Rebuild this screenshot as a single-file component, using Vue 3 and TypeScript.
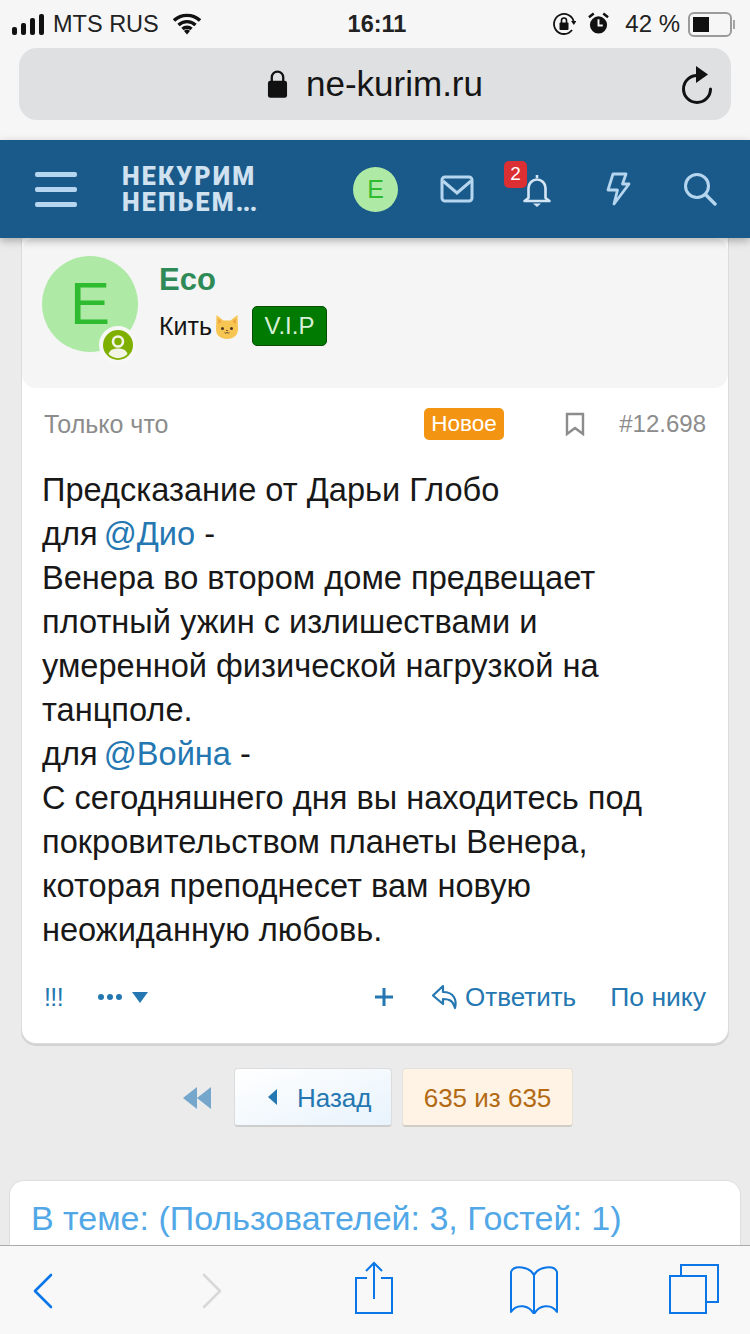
<script setup lang="ts">
// Страница темы форума в мобильном Safari
interface BodyLine {
  text: string
  mention?: string
  tail?: string
}

const lines: BodyLine[] = [
  { text: 'Предсказание от Дарьи Глобо' },
  { text: 'для ', mention: '@Дио', tail: ' -' },
  { text: 'Венера во втором доме предвещает' },
  { text: 'плотный ужин с излишествами и' },
  { text: 'умеренной физической нагрузкой на' },
  { text: 'танцполе.' },
  { text: 'для ', mention: '@Война', tail: ' -' },
  { text: 'С сегодняшнего дня вы находитесь под' },
  { text: 'покровительством планеты Венера,' },
  { text: 'которая преподнесет вам новую' },
  { text: 'неожиданную любовь.' },
]

const signal = [8, 12, 17, 21]
</script>

<template>
  <div class="screen">
    <div class="chrome">
      <div class="status">
        <div class="st-left">
          <div class="signal">
            <i v-for="h in signal" :key="h" :style="{ height: h + 'px' }"></i>
          </div>
          <span>MTS RUS</span>
          <svg class="wifi" width="28" height="22" viewBox="0 0 28 22">
            <path d="M1 7.5a19 19 0 0 1 26 0M5.5 12a12.5 12.5 0 0 1 17 0M9.5 16a6.5 6.5 0 0 1 9 0" fill="none" stroke="#111" stroke-width="3.4" />
            <path d="M14 21.5l-3-3.6a4.5 4.5 0 0 1 6 0z" fill="#111" />
          </svg>
        </div>
        <div class="st-time">16:11</div>
        <div class="st-right">
          <svg width="24" height="26" viewBox="0 0 24 26">
            <path d="M20 19A10 10 0 1 1 21.8 11" fill="none" stroke="#111" stroke-width="1.8" />
            <path d="M19 10h5.5l-2.7 4z" fill="#111" />
            <rect x="7.5" y="11.5" width="9" height="7.5" rx="1" fill="#111" />
            <path d="M9.5 12V9.500a2.500 2.500 0 0 1 5 0V12" fill="none" stroke="#111" stroke-width="1.6" />
          </svg>
          <svg class="alarm" width="21" height="26" viewBox="0 0 22 26">
            <circle cx="11" cy="14" r="9" fill="#111" />
            <path d="M11 8v6.5h4.5" fill="none" stroke="#f6f6f6" stroke-width="2" />
            <path d="M1 6l5-4M21 6l-5-4" stroke="#111" stroke-width="2.6" />
          </svg>
          <span class="pct">42 %</span>
          <div class="battery"><i></i></div>
          <div class="nub"></div>
        </div>
      </div>
      <div class="address">
        <svg class="lock" width="21" height="28" viewBox="0 0 22 29">
          <rect x="1" y="11" width="20" height="18" rx="2.5" fill="#111" />
          <path d="M5 12V7.5a6 6 0 0 1 12 0V12" fill="none" stroke="#111" stroke-width="2.4" />
        </svg>
        <span class="host">ne-kurim.ru</span>
        <svg class="reload" width="32" height="38" viewBox="0 0 32 38">
          <path d="M15 9.500A13.500 13.500 0 1 0 28.500 23" fill="none" stroke="#111" stroke-width="3" stroke-linecap="round" />
          <path d="M14 0l12 8.500-12 8.500z" fill="#111" />
        </svg>
      </div>
    </div>

    <header class="forum-head">
      <div class="burger"><i></i><i></i><i></i></div>
      <div class="logo">НЕКУРИМ<br />НЕПЬЕМ<span class="dots">...</span></div>
      <div class="head-avatar">E</div>
      <svg class="h-ic mail" width="34" height="28" viewBox="0 0 34 28">
        <rect x="2" y="2" width="30" height="24" rx="3" fill="none" stroke="#b6d6f0" stroke-width="3" />
        <path d="M3 6l14 12L31 6" fill="none" stroke="#b6d6f0" stroke-width="3" />
      </svg>
      <div class="bell-wrap">
        <svg width="30" height="34" viewBox="0 0 30 34">
          <path d="M15 2v3M6.500 25V15a8.500 8.500 0 0 1 17 0v10l4 3H2.500z" fill="none" stroke="#d4e6f5" stroke-width="2.600" stroke-linejoin="round" />
          <path d="M11 30.500h8l-4 3.500z" fill="#d4e6f5" />
        </svg>
        <span class="count">2</span>
      </div>
      <svg class="h-ic bolt" width="26" height="34" viewBox="0 0 26 34">
        <path d="M8 2h13l-3.500 10H24L9 32l3.500-14H3z" fill="none" stroke="#b6d6f0" stroke-width="2.800" stroke-linejoin="round" />
      </svg>
      <svg class="h-ic search" width="34" height="34" viewBox="0 0 34 34">
        <circle cx="14" cy="14" r="11.500" fill="none" stroke="#b6d6f0" stroke-width="3" />
        <path d="M22.500 22.500L32 32" stroke="#b6d6f0" stroke-width="3.400" stroke-linecap="round" />
      </svg>
    </header>

    <main class="page">
      <article class="post">
        <div class="user">
          <div class="avatar">
            E
            <span class="online">
              <svg width="30" height="30" viewBox="0 0 30 30">
                <circle cx="15" cy="15" r="15" fill="#7fb000" />
                <circle cx="15" cy="11.500" r="5" fill="#7fb000" stroke="#f2f5e6" stroke-width="2.600" />
                <path d="M5.500 24c2-5 5.500-5.500 9.500-5.500s7.500.5 9.500 5.500a13 13 0 0 1-19 0z" fill="#f2f5e6" />
              </svg>
            </span>
          </div>
          <div class="user-info">
            <div class="name">Eco</div>
            <div class="title-row">
              <span>Кить</span>
              <svg class="cat" width="26" height="26" viewBox="0 0 26 26">
                <path d="M2.500 1l7 5.500h7l7-5.500 .5 14.500c0 6-5 9.500-11 9.500S2 21.500 2 15.500z" fill="#f7c552" />
                <path d="M4 4.500l3.500 3L4.500 10zM22 4.500l-3.500 3 3 2.500z" fill="#eda33f" />
                <circle cx="8.500" cy="14.500" r="1.500" fill="#4a3320" />
                <circle cx="17.500" cy="14.500" r="1.500" fill="#4a3320" />
                <path d="M13 17l-1.500-1h3z" fill="#4a3320" />
                <path d="M10.500 18.500c1 1.200 2 1 2.500-.5.500 1.500 1.500 1.700 2.500.5" fill="none" stroke="#4a3320" stroke-width=".8" />
              </svg>
              <span class="vip">V.I.P</span>
            </div>
          </div>
        </div>

        <div class="meta">
          <span class="when">Только что</span>
          <span class="new-tag">Новое</span>
          <svg class="bookmark" width="20" height="24" viewBox="0 0 20 24">
            <path d="M2 2h16v20l-8-6-8 6z" fill="none" stroke="#8c8c8c" stroke-width="2.400" />
          </svg>
          <span class="num">#12.698</span>
        </div>

        <div class="body">
          <div v-for="(l, i) in lines" :key="i">
            {{ l.text }}<a v-if="l.mention" class="mention">{{ l.mention }}</a>{{ l.tail }}
          </div>
        </div>

        <div class="actions">
          <span class="bang">!!!</span>
          <span class="more">
            <i></i><i></i><i></i>
            <b></b>
          </span>
          <svg class="plus" width="20" height="20" viewBox="0 0 20 20">
            <path d="M10 1v18M1 10h18" stroke="#2577b1" stroke-width="3" />
          </svg>
          <svg class="reply" width="28" height="26" viewBox="0 0 28 26">
            <path d="M12 2L2 11.500 12 20v-5c6 0 9.500 1 12 9 2-8-1-16-12-16z" fill="none" stroke="#2577b1" stroke-width="2.200" stroke-linejoin="round" />
          </svg>
          <span class="act">Ответить</span>
          <span class="act nick">По нику</span>
        </div>
      </article>

      <nav class="pager">
        <svg class="first" width="28" height="22" viewBox="0 0 28 22">
          <path d="M14 0v22L0 11zM28 0v22L14 11z" fill="#75a6cb" />
        </svg>
        <button class="prev">
          <svg width="9" height="16" viewBox="0 0 9 16"><path d="M9 0v16L0 8z" fill="#2577b1" /></svg>
          <span>Назад</span>
        </button>
        <span class="current">635 из 635</span>
      </nav>

      <section class="online-box">
        <h3>В теме: (Пользователей: 3, Гостей: 1)</h3>
      </section>
    </main>

    <footer class="toolbar">
      <svg class="t-back" width="22" height="36" viewBox="0 0 22 36">
        <path d="M19 2L3 18l16 16" fill="none" stroke="#0a76e8" stroke-width="2.600" stroke-linecap="round" stroke-linejoin="round" />
      </svg>
      <svg class="t-fwd" width="22" height="36" viewBox="0 0 22 36">
        <path d="M3 2l16 16L3 34" fill="none" stroke="#d8d8d8" stroke-width="2.600" stroke-linecap="round" stroke-linejoin="round" />
      </svg>
      <svg class="t-share" width="40" height="54" viewBox="0 0 40 54">
        <path d="M13 17H2v35h36V17H27" fill="none" stroke="#0a76e8" stroke-width="2" />
        <path d="M20 38V2M12 10l8-8 8 8" fill="none" stroke="#0a76e8" stroke-width="2" />
      </svg>
      <svg class="t-book" width="50" height="50" viewBox="0 0 50 50">
        <path d="M25 11C21 3 5 0 2 8v40c6-9 18-7 23 2 5-9 17-11 23-2V8C45 0 29 3 25 11zM25 11v39" fill="none" stroke="#0a76e8" stroke-width="2" stroke-linejoin="round" />
      </svg>
      <svg class="t-tabs" width="50" height="50" viewBox="0 0 50 50">
        <rect x="1" y="12" width="36" height="37" fill="none" stroke="#0a76e8" stroke-width="2" />
        <path d="M12 12V1h37v37H38" fill="none" stroke="#0a76e8" stroke-width="2" />
      </svg>
    </footer>
  </div>
</template>

<style>
html,
body {
  margin: 0;
  background: #ebebeb;
}
</style>

<style scoped>
.screen {
  width: 750px;
  height: 1334px;
  display: flex;
  flex-direction: column;
  overflow: hidden;
  background: #ebebeb;
  color: #141414;
  font-family: "Liberation Sans", Arial, sans-serif;
}
.chrome {
  height: 140px;
  flex: none;
  background: #f6f6f6;
}
.status {
  height: 48px;
  padding: 0 15px 0 12px;
  display: grid;
  grid-template-columns: 1fr auto 1fr;
  align-items: center;
  font-size: 23.5px;
  box-sizing: border-box;
}
.st-left,
.st-right {
  display: flex;
  align-items: center;
}
.st-left span {
  margin-left: 9px;
  color: #222;
}
.signal {
  display: flex;
  align-items: flex-end;
  gap: 4px;
}
.signal i {
  width: 5px;
  border-radius: 2px;
  background: #111;
}
.wifi {
  margin-left: 14px;
}
.st-time {
  margin-left: 7px;
  font-size: 23.5px;
  font-weight: 700;
  color: #222;
}
.st-right {
  justify-content: flex-end;
}
.alarm {
  margin-left: 12px;
}
.pct {
  margin-left: 16px;
  font-size: 24px;
  color: #222;
}
.battery {
  width: 44px;
  height: 25px;
  margin-left: 8px;
  padding: 3px;
  box-sizing: border-box;
  border: 2px solid #9b9b9b;
  border-radius: 6px;
}
.battery i {
  display: block;
  width: 16px;
  height: 100%;
  background: #111;
}
.nub {
  width: 2px;
  height: 9px;
  margin-left: 1px;
  background: #a5a5a5;
}
.address {
  margin: 0 19px;
  height: 72px;
  border-radius: 18px;
  background: #dfe0e2;
  display: flex;
  align-items: center;
  justify-content: center;
  position: relative;
}
.lock {
  margin-right: 18px;
}
.host {
  font-size: 35px;
  color: #151515;
}
.reload {
  position: absolute;
  right: 17px;
  top: 18px;
}
.forum-head {
  height: 98px;
  flex: none;
  background: #1a5a8a;
  display: flex;
  align-items: center;
  position: relative;
  z-index: 2;
  box-shadow: 0 3px 8px rgba(0, 0, 0, 0.28);
}
.burger {
  width: 42px;
  margin-left: 35px;
  display: flex;
  flex-direction: column;
  gap: 10px;
}
.burger i {
  height: 5px;
  border-radius: 2px;
  background: #b6d6f0;
}
.logo {
  width: 146px;
  margin: 2px 0 0 45px;
  font-family: Roboto, "Liberation Sans", sans-serif;
  font-size: 25px;
  font-weight: 900;
  line-height: 26px;
  letter-spacing: 2.2px;
  color: #d0e1f0;
  white-space: nowrap;
}
.dots {
  letter-spacing: -0.6px;
}
.head-avatar {
  width: 45px;
  height: 45px;
  margin-left: 85px;
  border-radius: 50%;
  background: #aeeaa6;
  color: #2fbb2f;
  font-size: 25px;
  line-height: 45px;
  text-align: center;
}
.mail {
  margin-left: 42px;
}
.bell-wrap {
  width: 30px;
  height: 34px;
  margin-left: 48px;
  position: relative;
  top: 1px;
}
.count {
  position: absolute;
  left: -18px;
  top: -12px;
  width: 23px;
  height: 27px;
  border-radius: 5px;
  background: #dc2f34;
  color: #fff;
  font-size: 19px;
  line-height: 26px;
  text-align: center;
}
.bolt {
  margin-left: 53px;
}
.search {
  margin-left: 52px;
}
.page {
  flex: 1;
  min-height: 0;
  overflow: hidden;
  padding: 0 22px;
}
.post {
  height: 805px;
  background: #fff;
  border-radius: 0 0 14px 14px;
  box-shadow: 0 0 0 1px #dcdcdc, 0 2px 0 1px #d2d2d2;
  overflow: hidden;
}
.user {
  height: 150px;
  box-sizing: border-box;
  padding: 18px 20px;
  display: flex;
  background: #f5f5f5;
  border-radius: 14px;
}
.avatar {
  width: 96px;
  height: 96px;
  flex: none;
  border-radius: 50%;
  background: #aeeaa6;
  color: #2fbb2f;
  font-size: 60px;
  line-height: 96px;
  text-align: center;
  position: relative;
}
.online {
  position: absolute;
  right: 1px;
  bottom: -12px;
  width: 30px;
  height: 30px;
  border: 4px solid #f7f7f7;
  border-radius: 50%;
  display: block;
  background: #f7f7f7;
}
.online svg {
  display: block;
}
.user-info {
  margin-left: 21px;
}
.name {
  margin-top: 6px;
  font-size: 31px;
  line-height: 36px;
  font-weight: 700;
  color: #2e8b57;
}
.title-row {
  margin-top: 7px;
  display: flex;
  align-items: center;
  font-size: 25px;
  height: 42px;
}
.cat {
  margin: 0 0 -2px 2px;
}
.vip {
  margin-left: 12px;
  width: 75px;
  height: 40px;
  box-sizing: border-box;
  border: 1px solid #044f04;
  border-radius: 5px;
  background: #007a00;
  color: #d8f0d8;
  font-size: 24px;
  line-height: 37px;
  text-align: center;
}
.meta {
  height: 32px;
  margin: 20px 22px 0;
  display: flex;
  align-items: center;
  font-size: 25px;
  color: #8c8c8c;
}
.when {
  width: 380px;
}
.new-tag {
  width: 80px;
  height: 32px;
  border-radius: 5px;
  background: #f39412;
  color: #fff;
  font-size: 22.5px;
  line-height: 32px;
  text-align: center;
}
.bookmark {
  margin-left: 61px;
}
.num {
  margin-left: auto;
  font-size: 24px;
}
.body {
  margin: 28px 20px 0;
  font-size: 32.6px;
  line-height: 44px;
  color: #181818;
  white-space: nowrap;
}
.mention {
  margin-left: -3px;
  color: #2577b1;
}
.actions {
  height: 40px;
  margin: 25px 22px 0;
  display: flex;
  align-items: center;
  font-size: 26px;
  color: #2577b1;
}
.bang {
  width: 54px;
  font-size: 25px;
  letter-spacing: -0.6px;
}
.more {
  display: flex;
  align-items: center;
  gap: 3px;
  width: 276px;
}
.more i {
  width: 6px;
  height: 6px;
  border-radius: 50%;
  background: #2577b1;
}
.more b {
  width: 0;
  height: 0;
  margin-left: 7px;
  border-left: 8px solid transparent;
  border-right: 8px solid transparent;
  border-top: 11px solid #2577b1;
}
.reply {
  margin-left: 37px;
  flex: none;
}
.act {
  margin-left: 6px;
}
.act.nick {
  margin-left: auto;
  font-size: 26.5px;
}
.pager {
  height: 59px;
  margin-top: 25px;
  display: flex;
  align-items: center;
  padding-left: 161px;
}
.prev {
  width: 158px;
  height: 59px;
  margin-left: 23px;
  padding: 0 0 0 33px;
  display: flex;
  align-items: center;
  gap: 20px;
  border: 1px solid #dcdcdc;
  border-bottom: 2px solid #cdcdcd;
  border-radius: 4px;
  background: linear-gradient(160deg, #fff, #e8f3fc);
  color: #2577b1;
  font: 26px "Liberation Sans", Arial, sans-serif;
}
.prev span {
  padding-top: 2px;
}
.current {
  width: 171px;
  height: 59px;
  margin-left: 10px;
  box-sizing: border-box;
  border: 1px solid #e4e0da;
  border-bottom: 2px solid #d0cdc8;
  border-radius: 4px;
  background: #fef3e4;
  color: #b26a14;
  font-size: 26px;
  line-height: 58px;
  text-align: center;
}
.online-box {
  margin: 54px -12px 0;
  height: 120px;
  padding: 0 21px;
  background: #fff;
  border-radius: 14px;
  box-shadow: 0 0 0 1px #dedede;
}
.online-box h3 {
  margin: 0;
  padding-top: 18px;
  font-size: 34px;
  line-height: 38px;
  font-weight: 400;
  color: #52a8e6;
  white-space: nowrap;
}
.toolbar {
  height: 89px;
  flex: none;
  border-top: 1px solid #ababab;
  background: #f8f8f8;
  box-sizing: border-box;
  position: relative;
  z-index: 2;
  display: flex;
  align-items: flex-start;
}
.t-back {
  margin: 27px 0 0 32px;
}
.t-fwd {
  margin: 27px 0 0 147px;
}
.t-share {
  margin: 15px 0 0 131px;
}
.t-book {
  margin: 18px 0 0 115px;
}
.t-tabs {
  margin: 18px 0 0 110px;
}
</style>
